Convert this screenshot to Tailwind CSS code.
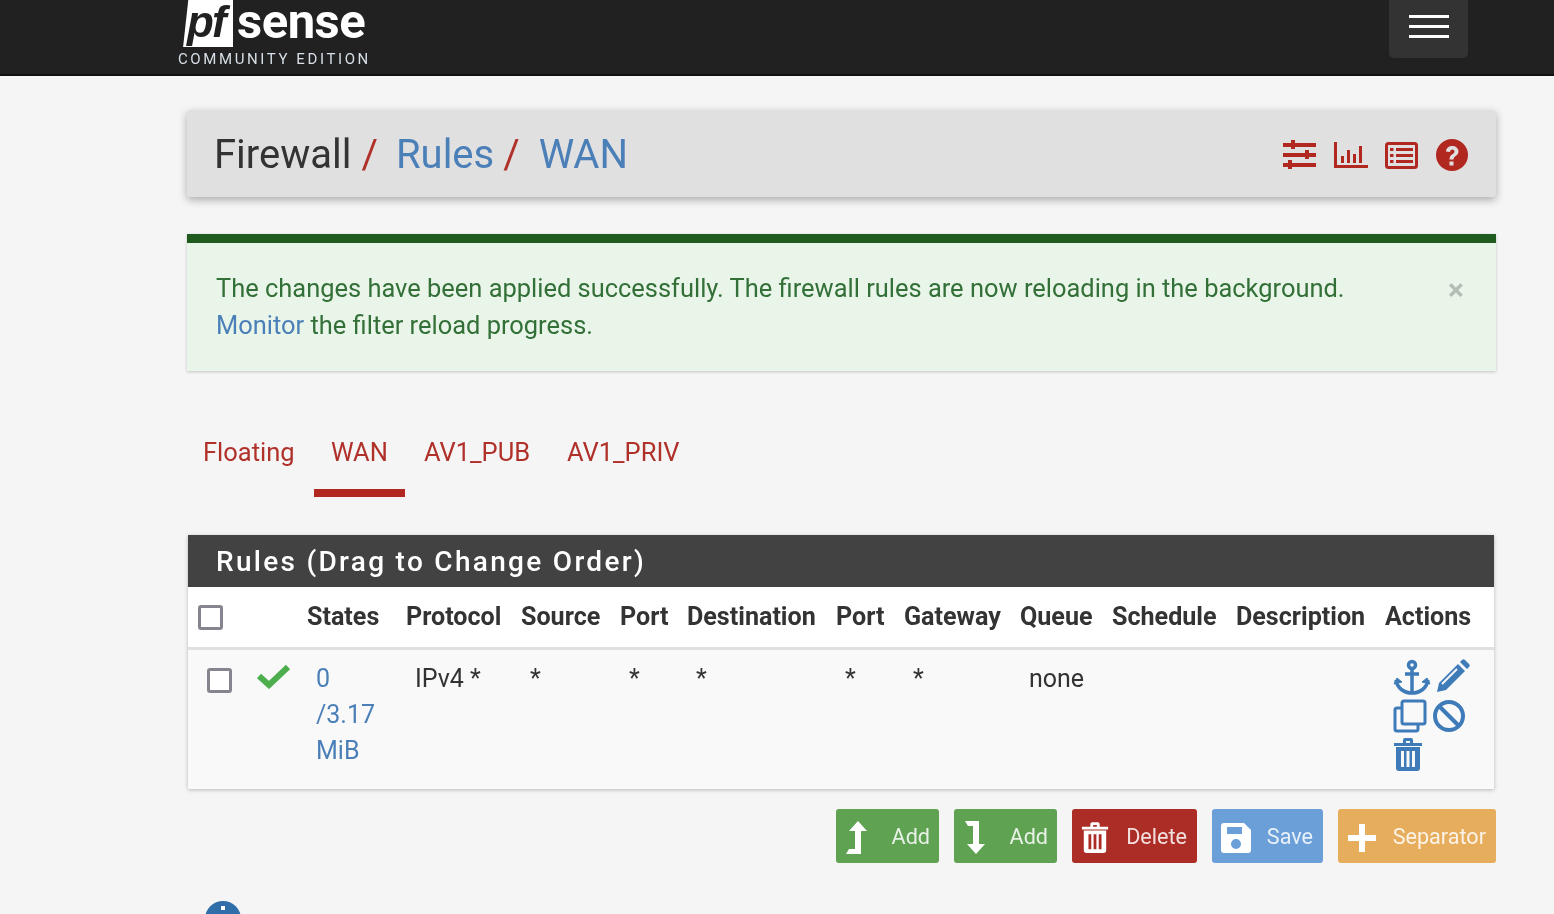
<!DOCTYPE html>
<html lang="en">
<head>
    <meta charset="UTF-8">
    <title>Firewall: Rules: WAN</title>
    <script src="https://cdn.jsdelivr.net/npm/@tailwindcss/browser@4"></script>
</head>
<body class="bg-[#f5f5f5] font-['Roboto',sans-serif] text-[#212121] overflow-hidden h-[914px] blur-[0.5px]">
    <!-- Navbar -->
    <header class="h-[76px] bg-[#212121] border-b-2 border-[#111] flex justify-between pl-[178px] pr-[86px]">
        <div class="w-[192px] relative">
            <div class="absolute left-[3px] top-0 w-[52px] h-[47px] bg-white [clip-path:polygon(14%_0,100%_0,100%_100%,4%_100%)]">
                <span class="absolute left-[6px] top-0 font-['Liberation_Sans',sans-serif] font-bold italic text-[44px] leading-[44px] text-[#212121] tracking-[-2px]">pf</span>
            </div>
            <span class="absolute left-[59px] top-[2px] font-bold text-[49px] leading-[40px] text-white tracking-[-0.5px]">sense</span>
            <span class="absolute left-0 top-[50px] text-[15px] leading-[18px] text-[#d7dfe8] tracking-[2.6px] whitespace-nowrap">COMMUNITY EDITION</span>
        </div>
        <button class="w-[79px] h-[58px] bg-[#333] rounded-b-[5px] flex flex-col items-center gap-[7px] pt-[15px]">
            <span class="w-[40px] h-[3px] bg-white"></span>
            <span class="w-[40px] h-[3px] bg-white"></span>
            <span class="w-[40px] h-[3px] bg-white"></span>
        </button>
    </header>

    <main class="ml-[187px] mr-[58px]">
        <!-- Breadcrumb -->
        <div class="mt-[34px] h-[87px] bg-[#e0e0e0] rounded-[3px] shadow-[0_3px_8px_rgba(0,0,0,0.3)] flex items-center justify-between pl-[27px] pr-[27px]">
            <h1 class="text-[40px] leading-[46px] pt-[3px] whitespace-nowrap">
                <span class="text-[#333]">Firewall</span><span class="text-[#b0312a] ml-[10px]">/</span>
                <span class="text-[#4b7fb8] ml-[8px]">Rules</span><span class="text-[#b0312a] ml-[9px]">/</span>
                <span class="text-[#4b7fb8] ml-[9px]">WAN</span>
            </h1>
            <div class="flex items-center gap-[15px] pt-[3px] text-[#b0281f]">
                <svg class="w-[36px] h-[36px]" viewBox="0 0 36 36" fill="currentColor"><rect x="1" y="6" width="33" height="4"/><rect x="9" y="3" width="4" height="9"/><rect x="1" y="16" width="33" height="4"/><rect x="23" y="13" width="4" height="9"/><rect x="1" y="26" width="33" height="4"/><rect x="6" y="23" width="4" height="9"/></svg>
                <svg class="w-[36px] h-[36px]" viewBox="0 0 36 36" fill="currentColor"><path d="M1 5h3v23h31v3H1z"/><rect x="8" y="19" width="3" height="7"/><rect x="14" y="13" width="3" height="13"/><rect x="20" y="17" width="3" height="9"/><rect x="26" y="9" width="3" height="17"/></svg>
                <svg class="w-[36px] h-[36px]" viewBox="0 0 36 36" fill="none" stroke="currentColor"><rect x="2.5" y="6.5" width="30" height="24" rx="2" stroke-width="3"/><path d="M6 12.5h3.5M12 12.5h17M6 18.5h3.5M12 18.5h17M6 24.5h3.5M12 24.5h17" stroke-width="3"/></svg>
                <svg class="w-[34px] h-[34px]" viewBox="0 0 34 34"><circle cx="17" cy="17" r="16" fill="currentColor"/><path d="M11 13.5c0-7.5 12.5-7.5 12.5 0 0 4.5-5 4-5 8h-4c0-5.500 5-5 5-8 0-2.800-4.500-2.800-4.500 0.500z" fill="#e0e0e0"/><rect x="14.500" y="23.500" width="4" height="4" fill="#e0e0e0"/></svg>
            </div>
        </div>

        <!-- Alert -->
        <div class="mt-[37px] h-[137px] bg-[#e9f5e9] border-t-[9px] border-[#1f5a1f] shadow-[0_1px_3px_rgba(0,0,0,0.2)] pt-[27px] pl-[29px] pr-[32px] flex justify-between">
            <p class="text-[25.44px] leading-[37px] text-[#337038] w-[1150px]">
                The changes have been applied successfully. The firewall rules are now reloading in the background.<br>
                <a class="text-[#4b7fb8]">Monitor</a> the filter reload progress.
            </p>
            <span class="font-bold text-[30px] leading-[37px] pt-[1px] text-[#b4bdb5]">×</span>
        </div>

        <!-- Tabs -->
        <nav class="mt-[58px] h-[68px] flex text-[25.5px] leading-[46px] text-[#b0312a]">
            <a class="w-[127px] pl-[16px]">Floating</a>
            <a class="w-[91px] text-center border-b-[8px] border-[#b0281f]">WAN</a>
            <a class="ml-[19px] w-[142px]">AV1_PUB</a>
            <a class="ml-[1px]">AV1_PRIV</a>
        </nav>

        <!-- Rules table -->
        <section class="mt-[38px] ml-[1px] mr-[2px] shadow-[0_1px_4px_rgba(0,0,0,0.25)]">
            <h2 class="h-[52px] bg-[#424242] text-white text-[28px] leading-[54px] font-medium pl-[28px] tracking-[2.3px]">Rules (Drag to Change Order)</h2>
            <div class="bg-white h-[63px] border-b-[3px] border-[#e0e0e0] pl-[10px] grid grid-cols-[50px_59px_99px_115px_99px_67px_149px_68px_116px_92px_124px_149px_1fr] items-center font-bold text-[25.1px] text-[#333]">
                <span class="w-[25px] h-[25px] border-[3px] border-[#85858f] rounded-[3px] bg-white"></span>
                <span></span>
                <span>States</span>
                <span>Protocol</span>
                <span>Source</span>
                <span>Port</span>
                <span>Destination</span>
                <span>Port</span>
                <span>Gateway</span>
                <span>Queue</span>
                <span>Schedule</span>
                <span>Description</span>
                <span>Actions</span>
            </div>
            <div class="bg-[#f9f9f9] h-[139px] pl-[10px] pt-[11px] grid grid-cols-[50px_59px_99px_115px_99px_67px_149px_68px_116px_92px_124px_149px_1fr] text-[25px] leading-[36px] text-[#333]">
                <span class="pl-[9px] pt-[7px]"><span class="block w-[25px] h-[25px] border-[3px] border-[#85858f] rounded-[3px] bg-white"></span></span>
                <span class="pl-[9px] pt-[2px]">
                    <svg class="w-[34px] h-[26px]" viewBox="0 0 34 26" fill="none" stroke="#4cae4c" stroke-width="6"><path d="M2 13l10 9L31 4"/></svg>
                </span>
                <a class="pl-[9px] text-[#4b7fb8]">0<br>/3.17<br>MiB</a>
                <span class="pl-[9px]">IPv4 *</span>
                <span class="pl-[9px]">*</span>
                <span class="pl-[9px]">*</span>
                <span class="pl-[9px]">*</span>
                <span class="pl-[9px]">*</span>
                <span class="pl-[9px]">*</span>
                <span class="pl-[9px]">none</span>
                <span></span>
                <span></span>
                <div class="pl-[8px] -mt-[2px] flex flex-wrap w-[90px] content-start gap-x-[3px] gap-y-[1px] text-[#3e7bb8]">
                    <svg class="w-[38px] h-[38px]" viewBox="0 0 38 38" fill="none" stroke="currentColor" stroke-width="3.500"><circle cx="19" cy="6" r="3.500"/><path d="M19 10v24M12 15h14M3 21c1 8 8 13 16 13s15-5 16-13"/><path d="M1 25l3-6 5 4z" fill="currentColor" stroke-width="1"/><path d="M37 25l-3-6-5 4z" fill="currentColor" stroke-width="1"/></svg>
                    <svg class="w-[36px] h-[36px]" viewBox="0 0 36 36" fill="currentColor"><path d="M3 33l2-9L24 5l7 7-19 19zM26 3l2-2c1-1 2-1 3 0l4 4c1 1 1 2 0 3l-2 2z"/><path d="M8 25l15-15" stroke="#f9f9f9" stroke-width="2"/></svg>
                    <svg class="w-[36px] h-[36px] -ml-[1px]" viewBox="0 0 36 36" fill="none" stroke="currentColor" stroke-width="3"><rect x="10" y="3" width="23" height="23" rx="2"/><path d="M10 10H5a2 2 0 0 0-2 2v19a2 2 0 0 0 2 2h19a2 2 0 0 0 2-2v-5"/></svg>
                    <svg class="w-[36px] h-[36px]" viewBox="0 0 36 36" fill="none" stroke="currentColor" stroke-width="4"><circle cx="18" cy="18" r="14"/><path d="M8 8l20 20"/></svg>
                    <svg class="w-[30px] h-[36px] mt-[2px]" viewBox="0 0 30 36" fill="currentColor"><path d="M1 6h28v3H1zM10 3a2 2 0 0 1 2-2h6a2 2 0 0 1 2 2v3h-3V4h-4v2h-3z"/><path fill-rule="evenodd" d="M3 10h24v21a3 3 0 0 1-3 3H6a3 3 0 0 1-3-3zM8 14v16h3V14zM13.500 14v16h3V14zM19 14v16h3V14z"/></svg>
                </div>
            </div>
        </section>

        <!-- Buttons -->
        <div class="mt-[20px] flex justify-end gap-[15px] text-[21.6px] text-white/85">
            <button class="w-[103px] h-[54px] pt-[3px] bg-[#5ea252] rounded-[3px] flex items-center justify-between pl-[9px] pr-[9px]">
                <svg class="w-[24px] h-[36px]" viewBox="0 0 24 36" fill="white"><path d="M13 1l9 10h-6v23H1l3-5h6V11H4z"/></svg>Add
            </button>
            <button class="w-[103px] h-[54px] pt-[3px] bg-[#5ea252] rounded-[3px] flex items-center justify-between pl-[9px] pr-[9px]">
                <svg class="w-[24px] h-[36px]" viewBox="0 0 24 36" fill="white"><path d="M2 1h14v23h6L13 34 4 24h6V6H5z"/></svg>Add
            </button>
            <button class="w-[125px] h-[54px] pt-[3px] bg-[#ab2d25] rounded-[3px] flex items-center justify-between pl-[9px] pr-[10px]">
                <svg class="w-[28px] h-[34px]" viewBox="0 0 30 36" fill="white"><path d="M1 6h28v3H1zM10 3a2 2 0 0 1 2-2h6a2 2 0 0 1 2 2v3h-3V4h-4v2h-3z"/><path fill-rule="evenodd" d="M3 10h24v21a3 3 0 0 1-3 3H6a3 3 0 0 1-3-3zM8 14v16h3V14zM13.500 14v16h3V14zM19 14v16h3V14z"/></svg>Delete
            </button>
            <button class="w-[111px] h-[54px] pt-[3px] bg-[#6a9fd8] rounded-[3px] flex items-center justify-between pl-[9px] pr-[10px]">
                <svg class="w-[30px] h-[30px]" viewBox="0 0 30 30" fill="white"><path fill-rule="evenodd" d="M3 0h20l7 7v20a3 3 0 0 1-3 3H3a3 3 0 0 1-3-3V3a3 3 0 0 1 3-3zM6 4v7h15V4zM15 16a5 5 0 1 0 0 10 5 5 0 0 0 0-10z"/></svg>Save
            </button>
            <button class="w-[158px] h-[54px] pt-[3px] bg-[#e6ad5c] rounded-[3px] flex items-center justify-between pl-[9px] pr-[10px]">
                <svg class="w-[30px] h-[30px]" viewBox="0 0 30 30" fill="white"><path d="M12 1h6v11h11v6H18v11h-6V18H1v-6h11z"/></svg>Separator
            </button>
        </div>

        <!-- Info icon, cut off by the window -->
        <svg class="mt-[38px] ml-[18px] w-[36px] h-[36px]" viewBox="0 0 36 36"><circle cx="18" cy="18" r="18" fill="#2f6ea8"/><rect x="16" y="5" width="4" height="4" fill="white"/></svg>
    </main>
</body>
</html>
